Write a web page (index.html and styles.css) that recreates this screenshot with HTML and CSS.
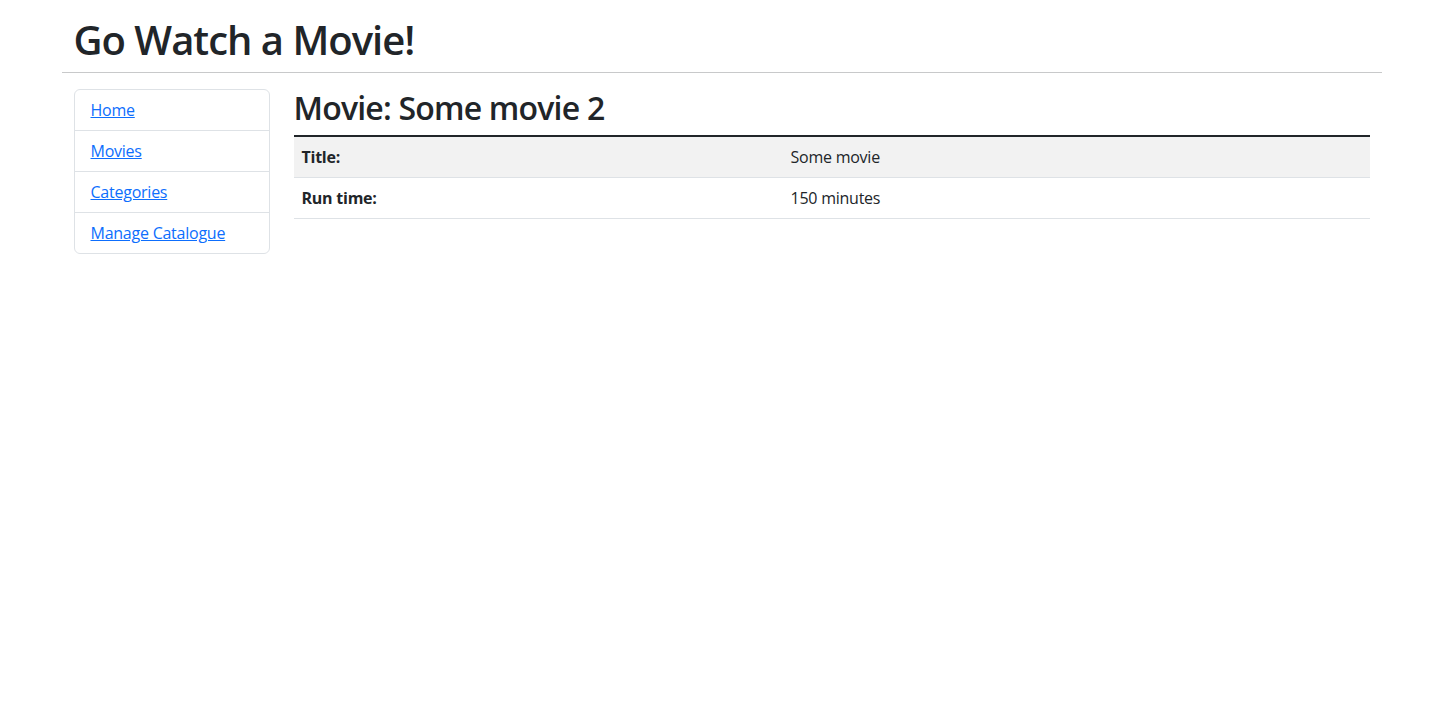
FILE: index.html
```html
<!DOCTYPE html>
<html lang="en">
<head>
<meta charset="utf-8">
<title>Go Watch a Movie!</title>
<link rel="stylesheet" href="styles.css">
</head>
<body>
<div class="container">
  <header class="page-header">
    <h1 class="site-title">Go Watch a Movie!</h1>
  </header>
  <hr class="divider">
  <div class="row">
    <nav class="sidebar">
      <div class="list-group">
        <a href="#" class="list-item">Home</a>
        <a href="#" class="list-item">Movies</a>
        <a href="#" class="list-item">Categories</a>
        <a href="#" class="list-item">Manage Catalogue</a>
      </div>
    </nav>
    <main class="content">
      <h2 class="movie-title">Movie: Some movie 2</h2>
      <table class="detail-table">
        <tbody>
          <tr class="striped">
            <th>Title:</th>
            <td>Some movie</td>
          </tr>
          <tr>
            <th>Run time:</th>
            <td>150 minutes</td>
          </tr>
        </tbody>
      </table>
    </main>
  </div>
</div>
</body>
</html>
```
FILE: styles.css
```css
* { box-sizing: border-box; }
body {
  margin: 0;
  font-family: "Open Sans", "Noto Sans", sans-serif;
  font-size: 16px;
  line-height: 24px;
  color: #212529;
  background: #fff;
  letter-spacing: -0.015em;
}
.container {
  width: 1320px;
  margin: 0 auto;
  padding: 0 12px;
}
.site-title {
  margin: 16px 0 8px;
  font-size: 40px;
  font-weight: 600;
  line-height: 48px;
  letter-spacing: -0.025em;
}
.divider {
  margin: 0 -12px 16px;
  border: 0;
  border-top: 1px solid #c8c9ca;
  height: 0;
}
.row {
  display: flex;
  gap: 24px;
}
.sidebar {
  width: 196px;
  flex: none;
}
.list-group {
  display: flex;
  flex-direction: column;
  border: 1px solid #dee2e6;
  border-radius: 6px;
}
.list-item {
  padding: 8px 16px;
  color: #0d6efd;
  text-decoration: underline;
  border-top: 1px solid #dee2e6;
}
.list-item:first-child { border-top: 0; }
.content {
  flex: 1;
}
.movie-title {
  margin: 0 0 8px;
  font-size: 32px;
  font-weight: 600;
  line-height: 38px;
  letter-spacing: -0.025em;
}
.detail-table {
  width: 100%;
  border-collapse: collapse;
  border-top: 2px solid #212529;
}
.detail-table th,
.detail-table td {
  padding: 8px;
  text-align: left;
  border-bottom: 1px solid #dee2e6;
  vertical-align: top;
}
.detail-table th {
  width: 489px;
  font-weight: 700;
}
.striped > * { background: #f2f2f2; }
```
